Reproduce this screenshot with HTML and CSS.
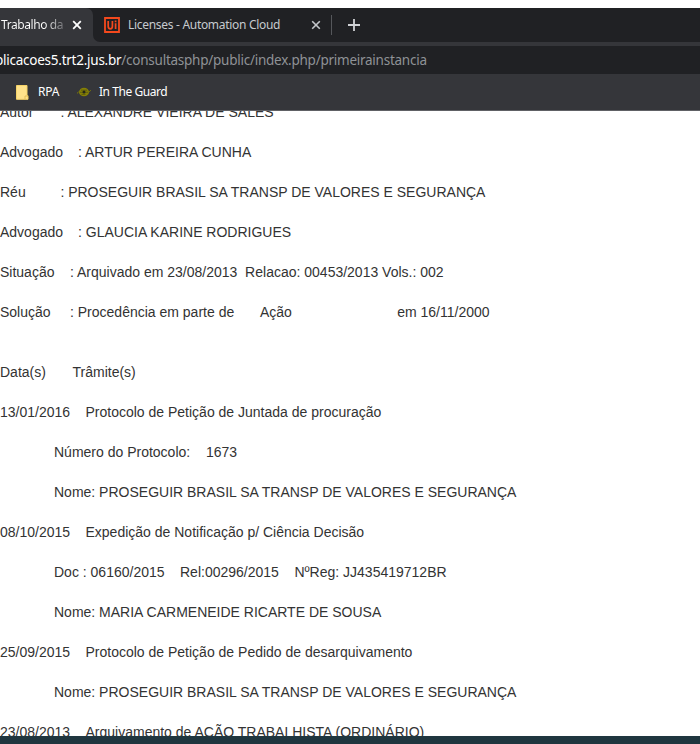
FILE: index.html
```html
<!DOCTYPE html>
<html lang="pt-BR">
<head>
<meta charset="utf-8">
<title>Consulta</title>
<link rel="stylesheet" href="styles.css">
</head>
<body>
<header class="browser">
  <div class="tabs">
    <div class="tab active">
      <span class="tab-title fade">Trabalho da</span>
      <svg class="close" viewBox="0 0 10 10"><path d="M1.2 1.2l7.6 7.6M8.8 1.2L1.2 8.8" stroke="#fff" stroke-width="1.8"/></svg>
    </div>
    <div class="tab">
      <svg class="favicon" viewBox="0 0 16 16"><path d="M1 1h14v14H1z" fill="none" stroke="#f4491d" stroke-width="1.8"/><path d="M4.2 4v5.2q0 2.6 2.1 2.6t2.1-2.6V4M11.6 6.3V12M11.6 3.6v1.6" fill="none" stroke="#f4491d" stroke-width="1.7"/></svg>
      <span class="tab-title licenses">Licenses - Automation Cloud</span>
      <svg class="close" viewBox="0 0 10 10"><path d="M1.2 1.2l7.6 7.6M8.8 1.2L1.2 8.8" stroke="#c4c7cb" stroke-width="1.6"/></svg>
    </div>
    <span class="divider"></span>
    <svg class="plus" viewBox="0 0 12 12"><path d="M6 0v12M0 6h12" stroke="#d0d2d5" stroke-width="1.8"/></svg>
  </div>
  <div class="address"><div class="url"><span class="host">plicacoes5.trt2.jus.br</span><span class="path">/consultasphp/public/index.php/primeirainstancia</span></div></div>
  <div class="bookmarks">
    <svg class="folder" viewBox="0 0 13 15"><path d="M.5.5h10.5v10.2h1v3.6H.5z" fill="#ffe28a" stroke="#f5d368"/><path d="M9 14v-3h3" fill="none" stroke="#dcb64f" stroke-width=".8"/></svg>
    <span class="rpa">RPA</span>
    <svg class="guard" viewBox="0 0 14 10"><path d="M0 6.3q1.2-.4 1.7-1.8M12.3 5.1q.5-1.5 1.5-1.8" fill="none" stroke="#77740c"/><ellipse cx="7" cy="5" rx="5" ry="4.3" fill="#858005"/><path d="M4 3.2h6M3 5.3h8M4.5 7.4h4" stroke="#45451a" stroke-width=".6"/><circle cx="7" cy="5" r="1.5" fill="#242719"/></svg>
    <span class="inguard">In The Guard</span>
  </div>
</header>
<main class="page">
  <p class="row"><span class="w60">Autor</span><span>: ALEXANDRE VIEIRA DE SALES</span></p>
  <p class="row"><span class="w78">Advogado</span><span>: ARTUR PEREIRA CUNHA</span></p>
  <p class="row"><span class="w60">Réu</span><span>: PROSEGUIR BRASIL SA TRANSP DE VALORES E SEGURANÇA</span></p>
  <p class="row"><span class="w78">Advogado</span><span>: GLAUCIA KARINE RODRIGUES</span></p>
  <p class="row"><span class="w70">Situação</span><span>: Arquivado em 23/08/2013&nbsp; Relacao: 00453/2013 Vols.: 002</span></p>
  <p class="row"><span class="w70">Solução</span><span class="w190">: Procedência em parte de</span><span class="w137">Ação</span><span>em 16/11/2000</span></p>
  <p class="row heading"><span class="w72">Data(s)</span><span>Trâmite(s)</span></p>
  <p class="row"><span class="w85">13/01/2016</span><span>Protocolo de Petição de Juntada de procuração</span></p>
  <p class="row detail"><span class="w152">Número do Protocolo:</span><span>1673</span></p>
  <p class="row detail">Nome: PROSEGUIR BRASIL SA TRANSP DE VALORES E SEGURANÇA</p>
  <p class="row"><span class="w85">08/10/2015</span><span>Expedição de Notificação p/ Ciência Decisão</span></p>
  <p class="row detail"><span class="w126">Doc : 06160/2015</span><span class="w114">Rel:00296/2015</span><span>NºReg: JJ435419712BR</span></p>
  <p class="row detail">Nome: MARIA CARMENEIDE RICARTE DE SOUSA</p>
  <p class="row"><span class="w85">25/09/2015</span><span>Protocolo de Petição de Pedido de desarquivamento</span></p>
  <p class="row detail">Nome: PROSEGUIR BRASIL SA TRANSP DE VALORES E SEGURANÇA</p>
  <p class="row"><span class="w85">23/08/2013</span><span>Arquivamento de AÇÃO TRABALHISTA (ORDINÁRIO)</span></p>
</main>
<footer class="taskbar"></footer>
</body>
</html>
```
FILE: styles.css
```css
* { box-sizing: border-box; }
body { margin: 0; width: 700px; height: 744px; overflow: hidden; display: flex; flex-direction: column; background: #fff; }
.browser { margin-top: 8px; height: 103px; flex: none; background: #35363a; border-bottom: 1px solid #606165; font: 12px/16px "Noto Sans", sans-serif; color: #fff; overflow: hidden; }
.tabs { height: 34px; display: flex; align-items: center; background: linear-gradient(90deg, #35363a 120px, #202124 120px); }
.tab { height: 34px; display: flex; align-items: center; }
.tab.active { width: 93px; padding-left: 1px; border-top-right-radius: 7px; background: #35363a; box-shadow: 7px -7px 0 #202124; position: relative; }
.tab-title { white-space: nowrap; letter-spacing: -0.3px; }
.active .tab-title { width: 71px; letter-spacing: -0.42px; }
.fade { background: linear-gradient(90deg, #fff 43px, #65666a 64px); -webkit-background-clip: text; background-clip: text; color: transparent; }
.close { width: 10px; height: 10px; flex: none; }
.tab:not(.active) { flex: none; width: 238px; padding-left: 11px; background: #202124; border-bottom-left-radius: 7px; }
.favicon { width: 16px; height: 16px; margin-right: 8px; flex: none; }
.licenses { width: 183px; color: #c6cace; }
.divider { width: 17px; height: 34px; background: linear-gradient(#55575b, #55575b) 0 7px / 1px 20px no-repeat #202124; }
.plus { width: 12px; height: 12px; }
.address { height: 32px; padding-top: 4px; }
.url { height: 28px; background: #202124; font-size: 13.5px; letter-spacing: -0.25px; line-height: 28px; white-space: nowrap; display: flex; }
.host { margin-left: -5px; }
.path { color: #8f9296; }
.bookmarks { height: 36px; display: flex; align-items: center; padding-left: 16px; }
.folder { width: 13px; height: 15px; margin-right: 9px; }
.rpa { width: 39px; letter-spacing: -0.2px; }
.guard { width: 14px; height: 10px; margin-right: 8px; }
.inguard { letter-spacing: -0.45px; }
.page { flex: 1; min-height: 0; overflow: hidden; font: 14px/20px "Liberation Sans", Arial, sans-serif; color: #333; }
.row { display: flex; height: 20px; margin: 0 0 20px; white-space: nowrap; }
.row:first-child { margin-top: -9px; }
.heading { margin-top: 40px; }
.detail { padding-left: 54px; }
.w60 { width: 60.4px; }
.w70 { width: 70px; }
.w72 { width: 72.5px; }
.w78 { width: 78px; }
.w85 { width: 85.5px; }
.w114 { width: 114.4px; }
.w126 { width: 126px; }
.w137 { width: 137.2px; }
.w152 { width: 152px; }
.w190 { width: 190px; }
.taskbar { height: 8px; flex: none; background: #20363f; }
```
